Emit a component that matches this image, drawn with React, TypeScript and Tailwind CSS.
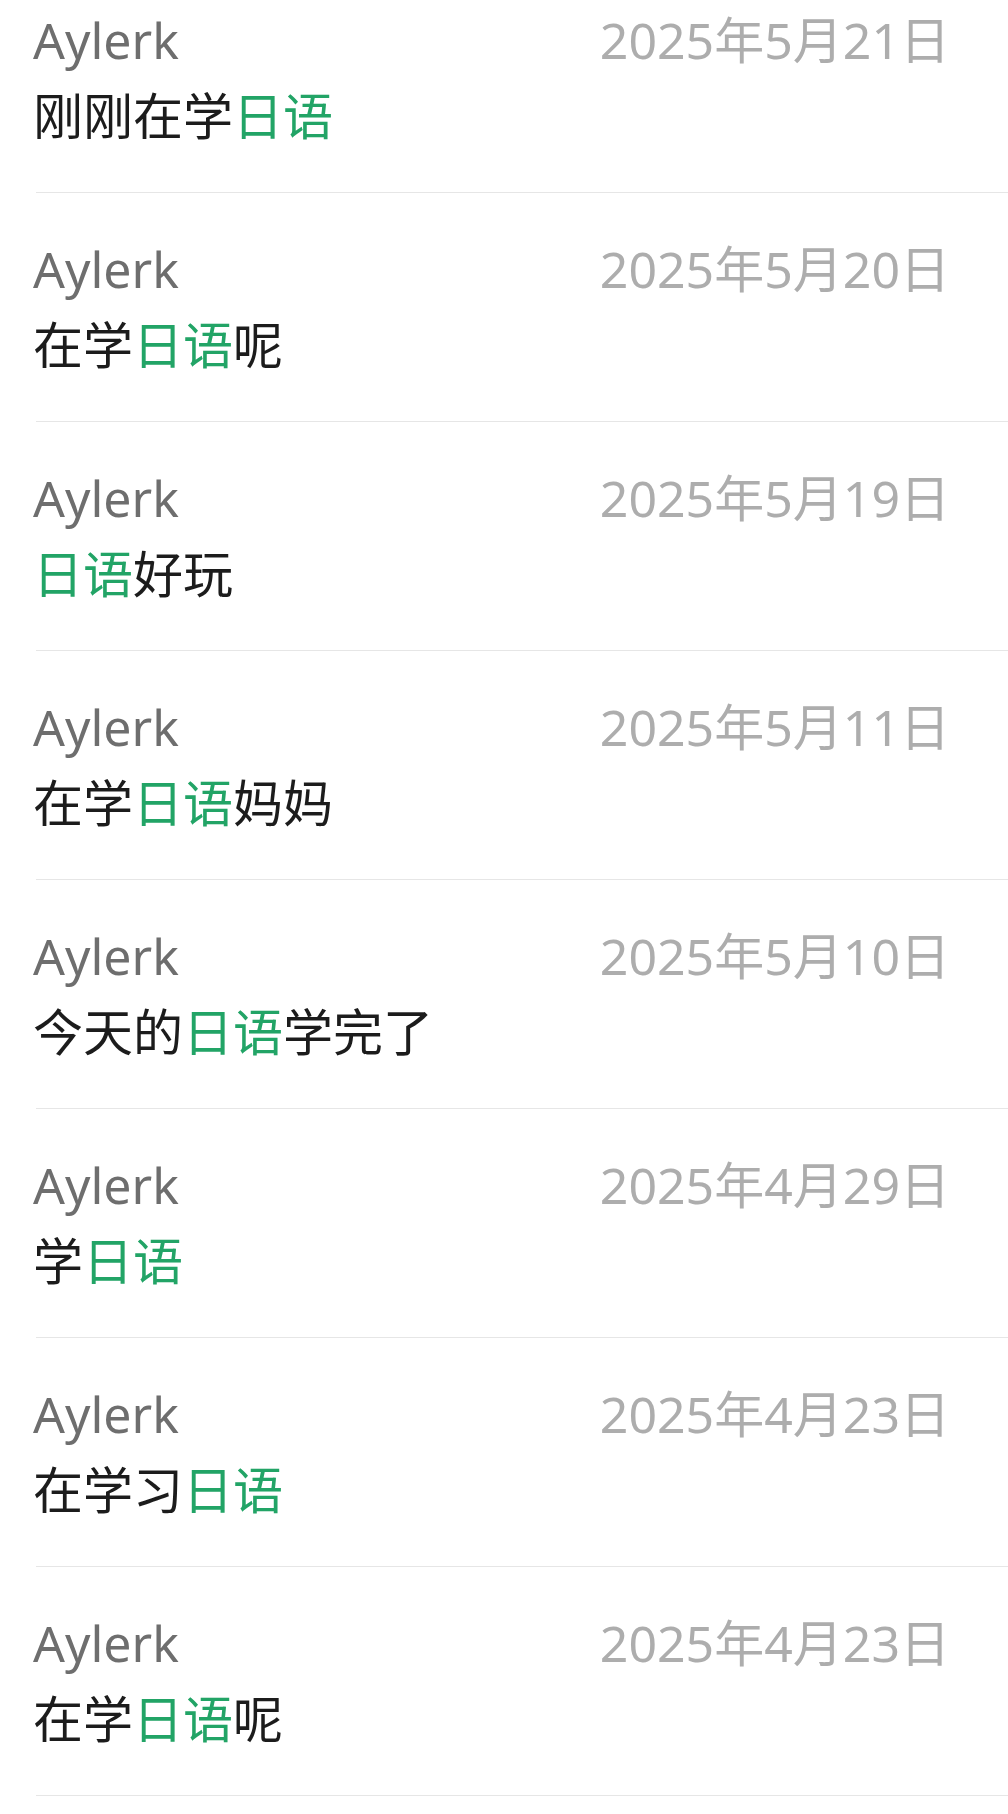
const rows = [
  { date: "2025年5月21日", before: "刚刚在学", after: "" },
  { date: "2025年5月20日", before: "在学", after: "呢" },
  { date: "2025年5月19日", before: "", after: "好玩" },
  { date: "2025年5月11日", before: "在学", after: "妈妈" },
  { date: "2025年5月10日", before: "今天的", after: "学完了" },
  { date: "2025年4月29日", before: "学", after: "" },
  { date: "2025年4月23日", before: "在学习", after: "" },
  { date: "2025年4月23日", before: "在学", after: "呢" },
];

const App = () => {
  return (
    <div className="min-h-[1814px] overflow-hidden bg-white font-['Noto_Sans','Noto_Sans_CJK_SC',sans-serif]">
      <div className="-mt-[36px]">
        {rows.map((row, i) => (
          <div key={i}>
            <div className="pl-[33px] pr-[58px] pt-[52px] pb-[52px]">
              <div className="flex items-baseline justify-between leading-[48px]">
                <span className="text-[50px] text-[#6e6e6e]">Aylerk</span>
                <span className="text-[50px] text-[#adadad]">{row.date}</span>
              </div>
              <p className="mt-[28px] text-[50px] leading-[48px] text-[#1c1c1c]">
                {row.before}
                <span className="text-[#22a466]">日语</span>
                {row.after}
              </p>
            </div>
            <div className="ml-[36px] h-px bg-[#e6e6e6]" />
          </div>
        ))}
      </div>
    </div>
  );
};

export default App;
